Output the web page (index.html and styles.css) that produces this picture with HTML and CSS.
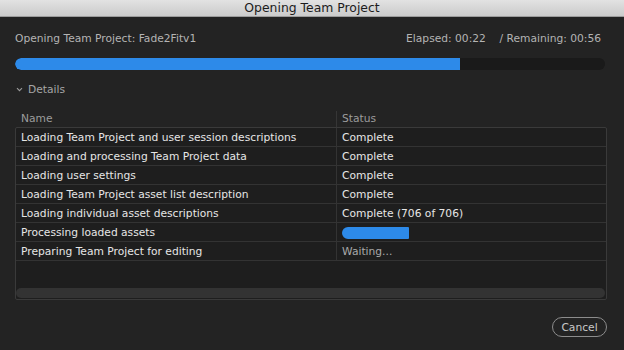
FILE: index.html
```html
<!DOCTYPE html>
<html>
<head>
<meta charset="utf-8">
<link rel="stylesheet" href="styles.css">
</head>
<body>
<div class="titlebar">Opening Team Project</div>
<div class="main">
  <div class="info">
    <span>Opening Team Project: Fade2Fitv1</span>
    <span>Elapsed: 00:22&nbsp;&nbsp;&nbsp; / Remaining: 00:56</span>
  </div>
  <div class="track"><div class="fill" style="width:75.4%"></div></div>
  <div class="details">
    <svg class="chev" width="7" height="5" viewBox="0 0 7 5"><path d="M1 1.2 L3.5 3.7 L6 1.2" fill="none" stroke="#9a9a9a" stroke-width="1.1"/></svg>
    <span>Details</span>
  </div>
  <div class="thead">
    <div class="c1">Name</div>
    <div class="c2">Status</div>
  </div>
  <div class="table">
    <div class="row"><div class="c1">Loading Team Project and user session descriptions</div><div class="c2">Complete</div></div>
    <div class="row"><div class="c1">Loading and processing Team Project data</div><div class="c2">Complete</div></div>
    <div class="row"><div class="c1">Loading user settings</div><div class="c2">Complete</div></div>
    <div class="row"><div class="c1">Loading Team Project asset list description</div><div class="c2">Complete</div></div>
    <div class="row"><div class="c1">Loading individual asset descriptions</div><div class="c2">Complete (706 of 706)</div></div>
    <div class="row"><div class="c1">Processing loaded assets</div><div class="c2"><div class="mini"></div></div></div>
    <div class="row"><div class="c1">Preparing Team Project for editing</div><div class="c2 wait">Waiting...</div></div>
    <div class="spacer"></div>
    <div class="hscroll"></div>
  </div>
  <div class="footer"><button class="cancel">Cancel</button></div>
</div>
</body>
</html>
```
FILE: styles.css
```css
* { box-sizing: border-box; }
html, body { margin: 0; padding: 0; }
body {
  width: 624px;
  height: 350px;
  background: #232323;
  font-family: "DejaVu Sans", "Liberation Sans", sans-serif;
  font-size: 10.7px;
  overflow: hidden;
}
.titlebar {
  height: 17px;
  background: linear-gradient(#e2e2e2, #cbcbcb);
  border-bottom: 1px solid #9c9c9c;
  color: #1c1c1c;
  font-size: 12.4px;
  line-height: 16px;
  text-align: center;
}
.main {
  padding: 15px 17px 0 15px;
  display: flex;
  flex-direction: column;
}
.info {
  display: flex;
  justify-content: space-between;
  color: #b4b4b4;
  line-height: 14px;
  padding-right: 6px;
}
.track {
  margin-top: 12px;
  margin-right: 2px;
  height: 12px;
  border-radius: 6px;
  background: #1a1a1a;
  overflow: hidden;
}
.fill {
  height: 100%;
  background: #2d8ae9;
  border-radius: 6px 0 0 6px;
}
.details {
  margin-top: 12px;
  height: 14px;
  display: flex;
  align-items: center;
  gap: 5px;
  padding-left: 1px;
  color: #a6a6a6;
}
.thead {
  margin-top: 15px;
  display: grid;
  grid-template-columns: 321px 1fr;
  height: 16px;
  line-height: 15px;
  color: #9c9c9c;
}
.thead .c1 { padding-left: 6px; }
.thead .c2 { border-left: 1px solid #363636; padding-left: 5px; }
.table {
  border: 1px solid #3a3a3a;
  border-radius: 2px;
  background: #1e1e1e;
  display: flex;
  flex-direction: column;
}
.row {
  display: grid;
  grid-template-columns: 320px 1fr;
  height: 19px;
  border-bottom: 1px solid #333;
  line-height: 18px;
  color: #e6e6e6;
}
.row .c1 { padding: 1px 0 0 5px; white-space: nowrap; }
.row .c2 { border-left: 1px solid #333; padding: 1px 0 0 5px; display: flex; align-items: center; }
.row .wait { color: #aaaaaa; }
.mini {
  width: 67px;
  height: 12px;
  margin-top: -1px;
  background: #2d8ae9;
  border-radius: 6px 1px 1px 6px;
}
.spacer { height: 27px; }
.hscroll {
  margin: 0 1px 1px 0;
  height: 10px;
  border-radius: 5px;
  background: #333333;
}
.footer {
  margin-top: 17px;
  display: flex;
  justify-content: flex-end;
}
.cancel {
  width: 55px;
  height: 20px;
  border: 1px solid #8c8c8c;
  border-radius: 10px;
  background: transparent;
  color: #c8c8c8;
  font-family: "DejaVu Sans", "Liberation Sans", sans-serif;
  font-size: 10.7px;
  padding: 0;
}
```
